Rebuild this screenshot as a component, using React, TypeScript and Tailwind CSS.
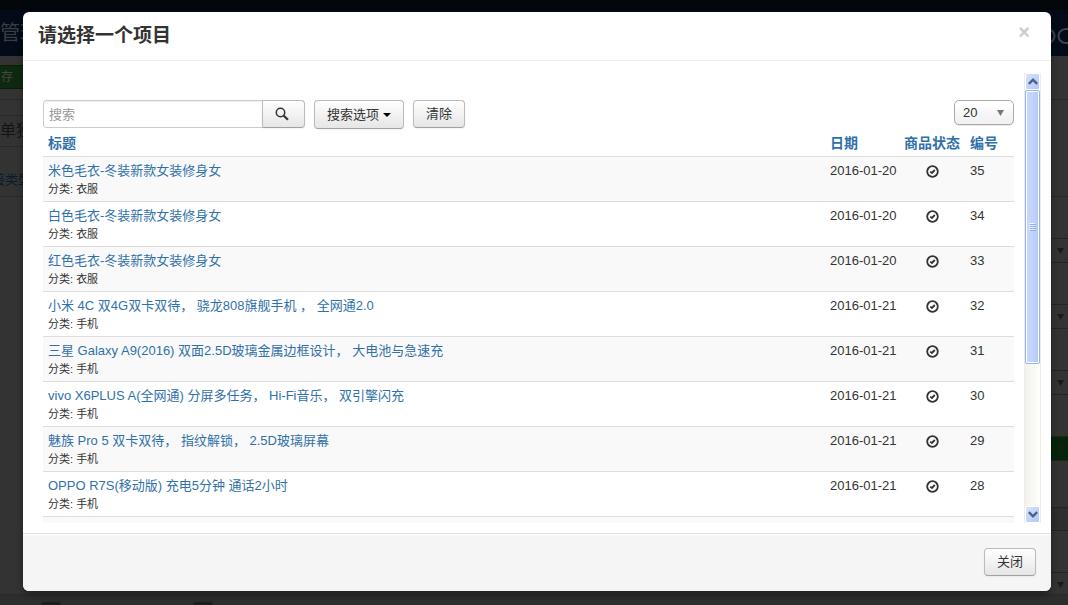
import type { ReactNode } from "react";

type Item = { id: number; title: string; category: string; date: string };

const items: Item[] = [
  { id: 35, title: "米色毛衣-冬装新款女装修身女", category: "衣服", date: "2016-01-20" },
  { id: 34, title: "白色毛衣-冬装新款女装修身女", category: "衣服", date: "2016-01-20" },
  { id: 33, title: "红色毛衣-冬装新款女装修身女", category: "衣服", date: "2016-01-20" },
  { id: 32, title: "小米 4C 双4G双卡双待， 骁龙808旗舰手机 ， 全网通2.0", category: "手机", date: "2016-01-21" },
  { id: 31, title: "三星 Galaxy A9(2016) 双面2.5D玻璃金属边框设计， 大电池与急速充", category: "手机", date: "2016-01-21" },
  { id: 30, title: "vivo X6PLUS A(全网通) 分屏多任务， Hi-Fi音乐， 双引擎闪充", category: "手机", date: "2016-01-21" },
  { id: 29, title: "魅族 Pro 5 双卡双待， 指纹解锁， 2.5D玻璃屏幕", category: "手机", date: "2016-01-21" },
  { id: 28, title: "OPPO R7S(移动版) 充电5分钟 通话2小时", category: "手机", date: "2016-01-21" },
];

const buttonBase =
  "flex items-center justify-center border border-[#bbb] border-b-[#a2a2a2] bg-linear-to-b from-white to-[#e6e6e6] text-[#333] shadow-[0_1px_2px_rgba(0,0,0,0.05)]";

function Button({ className, children }: { className: string; children: ReactNode }) {
  return (
    <button type="button" className={`${buttonBase} rounded ${className}`}>
      {children}
    </button>
  );
}

function CheckCircle() {
  return (
    <svg viewBox="0 0 13 13" className="mx-auto mt-[3px] block size-[13px]" fill="none" stroke="#333" role="img" aria-label="已发布">
      <circle cx="6.5" cy="6.5" r="5.3" strokeWidth="1.8" />
      <path d="M4.2 6.6 5.9 8 8.8 5" strokeWidth="1.8" />
    </svg>
  );
}

function Scrollbar() {
  const arrow =
    "flex h-[17px] shrink-0 items-center justify-center rounded-xs border border-white bg-linear-to-br from-[#d6e2fe] to-[#b0c8fb]";
  return (
    <div className="flex w-[17px] shrink-0 flex-col border-x border-[#eeede5] bg-linear-to-r from-[#f2f1ec] to-[#fefefb]">
      <button type="button" aria-label="向上滚动" className={arrow}>
        <svg viewBox="0 0 10 7" className="h-[7px] w-2.5" fill="none" stroke="#4d6185" strokeWidth="2.4">
          <path d="M.9 5.8 5 1.7 9.1 5.8" />
        </svg>
      </button>
      <div className="flex flex-[275] items-center justify-center rounded-xs border border-[#98b4e8] bg-linear-to-r from-[#c9d8fd] via-[#c2d3fd] to-[#b1c9f8] ring-1 ring-white ring-inset">
        <svg viewBox="0 0 7 8" className="h-2 w-[7px]">
          <path d="M0 .5h6M0 2.5h6M0 4.5h6M0 6.5h6" stroke="#eef4fe" />
          <path d="M1 1.5h6M1 3.5h6M1 5.5h6M1 7.5h6" stroke="#8cb0f8" />
        </svg>
      </div>
      <div className="flex-[143]" />
      <button type="button" aria-label="向下滚动" className={arrow}>
        <svg viewBox="0 0 10 7" className="h-[7px] w-2.5" fill="none" stroke="#4d6185" strokeWidth="2.4">
          <path d="M.9 1.2 5 5.3 9.1 1.2" />
        </svg>
      </button>
    </div>
  );
}

function DimSelect({ className = "" }: { className?: string }) {
  return (
    <div className={`flex h-[25px] shrink-0 items-center border-y border-[#252525] pl-1.5 ${className}`}>
      <svg viewBox="0 0 7 6" className="h-1.5 w-[7px]">
        <path d="M0 0h7L3.5 6z" fill="#1a1a1a" />
      </svg>
    </div>
  );
}

function PageBehind() {
  return (
    <div aria-hidden="true" className="absolute inset-0 flex flex-col overflow-hidden bg-[#333] whitespace-nowrap">
      <div className="h-2.5 shrink-0 bg-[#03060b]" />
      <div className="flex h-[46px] shrink-0 items-center justify-between bg-[#030b18] text-[#3a3d42]">
        <span className="text-[20px]">管理</span>
        <svg viewBox="0 0 21 20" className="mt-1.5 h-5 w-[21px]" fill="none" stroke="#3d4148" strokeWidth="2.2">
          <path d="M0 3c10 0 10 14 0 14M22 3h-3c-10 0-10 14 0 14h3" />
        </svg>
      </div>
      <div className="flex min-h-0 flex-1 justify-between">
        <div className="w-[23px]">
          <div className="mt-[9px] flex h-6 items-center border-y border-[#0a1c0a] bg-[#0e290f] pl-px text-xs text-[#414a42]">存</div>
          <div className="mt-2.5 h-[17px] border-y border-[#292929]" />
          <div className="h-[31px] border-b border-[#292929] text-[16px] leading-[30px] text-[#131313]">单独</div>
          <div className="h-[50px] border-b border-[#292929] pt-4 -indent-2 text-[13px] leading-[34px] text-[#081c2c]">接类型</div>
        </div>
        <div className="flex w-[17px] flex-col">
          <div className="h-11 shrink-0 border-b border-[#292929]" />
          <div className="h-[97px] shrink-0 border-b border-[#292929]" />
          <DimSelect className="mt-[41px]" />
          <DimSelect className="mt-[41px]" />
          <DimSelect className="mt-[41px]" />
          <DimSelect className="mt-[41px] bg-[#07240b]" />
          <div className="mt-[46px] h-6 shrink-0 border-y border-[#252525] bg-[#2e2e2e]" />
          <DimSelect className="mt-[41px]" />
        </div>
      </div>
      <div className="flex h-[11px] shrink-0 items-end gap-[132px] border-t border-[#292929] bg-[#2d2d2d] pl-[41px]">
        <div className="h-[3px] w-5 rounded-t-full bg-[#1d1d1d]" />
        <div className="h-[3px] w-5 rounded-t-full bg-[#1d1d1d]" />
      </div>
    </div>
  );
}

export default function App() {
  return (
    <div className="relative h-screen font-['Liberation_Sans','Noto_Sans_CJK_SC',sans-serif] text-[13px] leading-[18px] text-[#333]">
      <PageBehind />
      <div className="relative h-full pt-3 pr-[17px] pb-3.5 pl-[23px]">
        <section
          role="dialog"
          aria-labelledby="dialog-title"
          className="flex h-full flex-col overflow-hidden rounded-md bg-white shadow-[0_3px_7px_rgba(0,0,0,0.4)]"
        >
          <header className="flex h-[49px] shrink-0 items-start justify-between border-b border-[#eee] pr-[21px] pl-[15px]">
            <h3 id="dialog-title" className="pt-2.5 text-[19px] leading-[27px] font-bold">
              请选择一个项目
            </h3>
            <button type="button" aria-label="关闭窗口" className="pt-2.5 text-[20px] leading-5 font-bold text-[#ccc]">
              ×
            </button>
          </header>

          <div className="flex min-h-0 flex-1 gap-2.5 pt-3 pr-2.5 pb-2.5 pl-5">
            <div className="min-w-0 flex-1 overflow-y-auto pt-[27px] [scrollbar-width:none]">
              <form className="flex h-[29px] items-start justify-between">
                <div className="flex items-start gap-[9px]">
                  <div className="flex">
                    <input
                      type="text"
                      aria-label="搜索"
                      placeholder="搜索"
                      className="h-7 w-[220px] rounded-l-[3px] border border-[#ccc] px-[5px] shadow-[inset_0_1px_1px_rgba(0,0,0,0.075)] outline-none placeholder:text-[#999]"
                    />
                    <button type="button" aria-label="开始搜索" className={`${buttonBase} -ml-px h-7 w-[43px] rounded-r pr-1`}>
                      <svg viewBox="0 0 14 14" className="size-3.5" fill="none" stroke="#333">
                        <circle cx="5.5" cy="5.5" r="4.2" strokeWidth="1.5" />
                        <path d="M8.7 8.7 13 12.8" strokeWidth="2.2" />
                      </svg>
                    </button>
                  </div>
                  <Button className="h-[29px] gap-1 px-3">
                    搜索选项
                    <svg viewBox="0 0 8 4" className="h-1 w-2">
                      <path d="M0 0h8L4 4z" fill="#000" />
                    </svg>
                  </Button>
                  <Button className="h-7 px-3">清除</Button>
                </div>
                <div className="relative">
                  <select
                    aria-label="每页数量"
                    defaultValue="20"
                    className="h-[25px] w-[60px] appearance-none rounded-[5px] border border-[#aaa] bg-linear-to-b from-white from-20% via-[#f6f6f6] via-50% to-[#f1f1f1] pt-px pl-2 shadow-[0_1px_1px_rgba(0,0,0,0.1)]"
                  >
                    <option>20</option>
                  </select>
                  <svg viewBox="0 0 7 6" className="pointer-events-none absolute top-2.5 right-[10px] h-1.5 w-[7px]">
                    <path d="M0 0h7L3.5 6z" fill="#777" />
                  </svg>
                </div>
              </form>

              <table className="w-full table-fixed border-collapse text-left">
                <colgroup>
                  <col />
                  <col className="w-[74px]" />
                  <col className="w-[66px]" />
                  <col className="w-[49px]" />
                </colgroup>
                <thead>
                  <tr className="h-[27px] text-[14px] whitespace-nowrap text-[#3071a9]">
                    {["标题", "日期", "商品状态", "编号"].map((label) => (
                      <th key={label} scope="col" className="px-[5px] pt-[5px] pb-1 font-bold">
                        <a href="#">{label}</a>
                      </th>
                    ))}
                  </tr>
                </thead>
                <tbody>
                  {items.map((item) => (
                    <tr key={item.id} className="h-[45px] border-t border-[#ddd] align-top odd:bg-[#f9f9f9]">
                      <td className="px-[5px] pt-[5px] pb-[3px]">
                        <a href="#" className="block text-[#3071a9]">
                          {item.title}
                        </a>
                        <div className="text-[11px] leading-[18px]">分类: {item.category}</div>
                      </td>
                      <td className="px-[5px] pt-[5px] pb-[3px] whitespace-nowrap">{item.date}</td>
                      <td className="px-[5px] pt-[5px] pb-[3px]">
                        <CheckCircle />
                      </td>
                      <td className="px-[5px] pt-[5px] pb-[3px]">{item.id}</td>
                    </tr>
                  ))}
                  <tr className="h-[45px] border-t border-[#ddd] bg-[#f9f9f9]">
                    <td colSpan={4} />
                  </tr>
                </tbody>
              </table>
            </div>
            <Scrollbar />
          </div>

          <footer className="flex h-[58px] shrink-0 items-start justify-end border-t border-[#ddd] bg-[#f5f5f5] pt-3.5 pr-[15px] shadow-[inset_0_1px_0_#fff]">
            <Button className="h-7 px-3">关闭</Button>
          </footer>
        </section>
      </div>
    </div>
  );
}
